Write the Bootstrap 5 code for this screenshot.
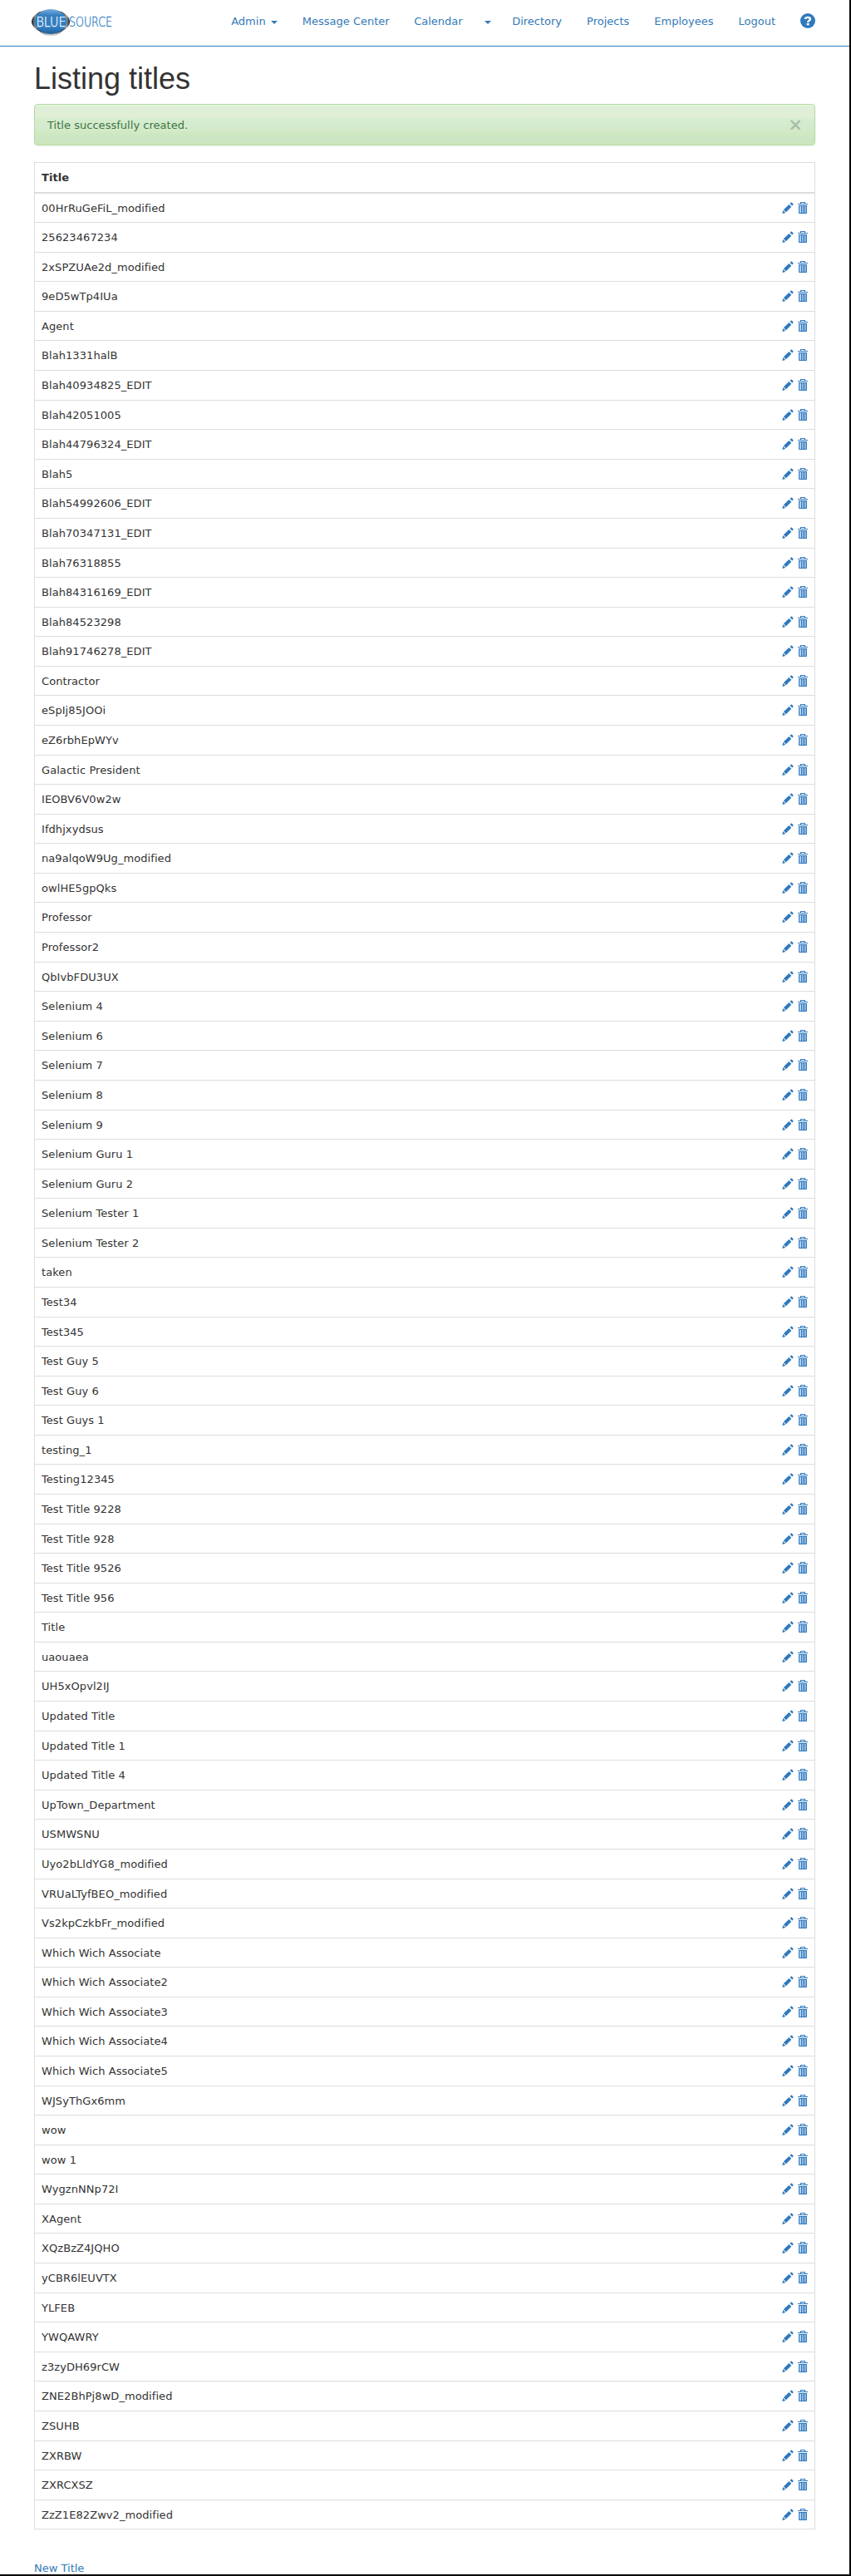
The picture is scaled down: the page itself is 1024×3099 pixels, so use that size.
<!DOCTYPE html>
<html lang="en">
<head>
<meta charset="utf-8">
<meta name="viewport" content="width=device-width, initial-scale=1">
<title>Listing titles</title>
<link href="https://cdn.jsdelivr.net/npm/bootstrap@5.3.0/dist/css/bootstrap.min.css" rel="stylesheet">
<style>
html, body { height: 3099px; overflow: hidden; }
body { font-family: Verdana, "DejaVu Sans", sans-serif; font-size: 13px; line-height: 1.428571; color: #333; background: #fff; }
a { color: #337ab7; text-decoration: none; }
.page-frame { height: 3099px; overflow: hidden; border-right: 2px solid #000; border-bottom: 2px solid #000; }
.top-bar { height: 56px; border-bottom: 1px solid #337ab7; padding: 0 41px 0 38px; }
.top-bar .nav-link { padding: 16px 15px 0; height: 52px; color: #337ab7; line-height: 19px; white-space: nowrap; }
.caret-down { display: inline-block; border-top: 4px solid; border-left: 4px solid transparent; border-right: 4px solid transparent; vertical-align: middle; margin-left: 2px; }
.top-bar .caret-link { padding-left: 10px; padding-right: 10px; }
.top-bar .calendar-link { padding-left: 14.5px; padding-right: 14.5px; }
.top-bar .help-link { padding-right: 0; }
.brand-logo { margin-top: 8px; }
.page-body { padding: 0 41px; }
h1 { font: 500 36px/40px "Liberation Sans", Arial, sans-serif; margin: 19px 0 10px; color: #333; }
.notice-bar { height: 50px; border: 1px solid #b2dba1; border-radius: 4px; padding: 0 15px; margin-bottom: 20px; color: #3c763d;
  background: linear-gradient(#e0f0d8 0, #dfeed5 15px, #d5edce 17px, #d4e9cf 28px, #d3eac5 31px, #cde8c3 36px, #cce5c3 43px, #cee7ba 48px);
  box-shadow: inset 0 1px 0 rgba(255,255,255,.25), 0 1px 2px rgba(0,0,0,.05); }
.notice-bar span { padding-top: 2px; letter-spacing: .03px; }
.notice-bar .dismiss { font: 400 26px/20px "Liberation Sans", Arial, sans-serif; color: #000; opacity: .2; background: none; border: 0; padding: 0; width: 16px; -webkit-text-stroke: .5px #000; }
.titles { --bs-table-color: #333; --bs-table-bg: #fff; color: #333; border: 1px solid #ddd; border-collapse: separate; border-spacing: 0; margin: 0 0 38px; letter-spacing: .07px; }
.titles > :not(caption) > * > * { padding: 9px 8px 7px; border: 0 solid #ddd; box-shadow: none; line-height: 18.58px; }
.titles > thead > tr > th { border-bottom-width: 2px; }
.titles > tbody > tr + tr > td { border-top-width: 1px; }
.row-tools svg { display: block; margin-top: 1px; }
.tool-set { height: 18.58px; gap: 5px; }
</style>
<script src="https://cdn.jsdelivr.net/npm/bootstrap@5.3.0/dist/js/bootstrap.bundle.min.js"></script>
</head>
<body>
<svg width="0" height="0" class="position-absolute" aria-hidden="true">
  <symbol id="pencil" viewBox="0 0 14 14"><path d="M.3 14l1-3.900 2.900 2.900zM1.900 9.300L8.400 2.900l2.900 2.900-6.500 6.400zM9.500 1.900l1-1c.5-.5 1-.5 1.400-.1l1.400 1.400c.4.4.4.900 0 1.400l-1 1z" fill="#2f78bd"/></symbol>
  <symbol id="trash" viewBox="0 0 12 14"><path d="M1 4h10v9.200q0 .8-.8.8H1.800Q1 14 1 13.200z" fill="#2f78bd"/><path d="M2 5h2v8H2zM5 5h1v8H5zM7 5h1v8H7zM9 5h1v8H9z" fill="#b0cef0"/><path d="M0 2h12v1H0zM3 0h6v2H8V1H4v1H3z" fill="#2f78bd"/></symbol>
</svg>
<div class="page-frame">
  <nav class="top-bar d-flex justify-content-between align-items-start">
    <a href="#" class="brand-logo" aria-label="Blue Source">
      <svg class="d-block overflow-visible" width="98" height="38" viewBox="38 8 98 38">
        <defs>
          <linearGradient id="ring" x1="0" x2="1"><stop offset="0" stop-color="#0d1114"/><stop offset=".1" stop-color="#999"/><stop offset=".2" stop-color="#222"/><stop offset=".8" stop-color="#222"/><stop offset=".91" stop-color="#aaa"/><stop offset="1" stop-color="#080c10"/></linearGradient>
          <linearGradient id="oval" x2="0" y2="1"><stop offset="0" stop-color="#79aedb"/><stop offset=".25" stop-color="#3680c2"/><stop offset=".75" stop-color="#317dc1"/><stop offset="1" stop-color="#225f96"/></linearGradient>
          <linearGradient id="shade" x2="0" y2="1"><stop offset=".8" stop-color="#777"/><stop offset="1" stop-color="#eee"/></linearGradient>
        </defs>
        <ellipse cx="61" cy="29" rx="17" ry="14.500" fill="url(#shade)"/>
        <ellipse cx="61" cy="26" rx="23" ry="14" fill="url(#ring)"/>
        <ellipse cx="61" cy="26" rx="19.500" ry="15" fill="url(#oval)"/>
        <g font-family="DejaVu Sans Light, DejaVu Sans, sans-serif" font-weight="200" font-size="15.500">
          <text x="43.500" y="31.500" fill="#fff" stroke="#fff" stroke-width=".25" textLength="36" lengthAdjust="spacingAndGlyphs">BLUE</text>
          <text x="83" y="31.500" fill="#317dc1" stroke="#317dc1" stroke-width=".35" textLength="52" lengthAdjust="spacingAndGlyphs">SOURCE</text>
        </g>
      </svg>
    </a>
    <div class="d-flex">
      <a class="nav-link" href="#">Admin <span class="caret-down"></span></a>
      <a class="nav-link" href="#">Message Center</a>
      <a class="nav-link calendar-link" href="#">Calendar</a>
      <a class="nav-link caret-link" href="#"><span class="caret-down"></span></a>
      <a class="nav-link" href="#">Directory</a>
      <a class="nav-link" href="#">Projects</a>
      <a class="nav-link" href="#">Employees</a>
      <a class="nav-link" href="#">Logout</a>
      <a class="nav-link help-link" href="#" aria-label="Help"><svg class="d-block" width="18" height="18" viewBox="0 0 18 18"><circle cx="9" cy="9" r="9" fill="#2f78bd"/><path d="M6 7C6 4.300 12 4.100 12 6.900 12 8.800 9.200 8.500 9.200 11" fill="none" stroke="#fff" stroke-width="2.400"/><path d="M7.700 12h3v2.300h-3z" fill="#fff"/></svg></a>
    </div>
  </nav>
  <main class="page-body">
    <h1>Listing titles</h1>
    <div class="notice-bar d-flex justify-content-between align-items-center" role="alert">
      <span>Title successfully created.</span>
      <button type="button" class="dismiss" aria-label="Close">×</button>
    </div>
    <table class="table titles">
      <thead><tr><th>Title</th><th></th></tr></thead>
      <tbody id="title-rows"></tbody>
    </table>
    <a href="#">New Title</a>
  </main>
</div>
<script>
const titles = `00HrRuGeFiL_modified
25623467234
2xSPZUAe2d_modified
9eD5wTp4IUa
Agent
Blah1331halB
Blah40934825_EDIT
Blah42051005
Blah44796324_EDIT
Blah5
Blah54992606_EDIT
Blah70347131_EDIT
Blah76318855
Blah84316169_EDIT
Blah84523298
Blah91746278_EDIT
Contractor
eSpIj85JOOi
eZ6rbhEpWYv
Galactic President
IEOBV6V0w2w
Ifdhjxydsus
na9alqoW9Ug_modified
owlHE5gpQks
Professor
Professor2
QbIvbFDU3UX
Selenium 4
Selenium 6
Selenium 7
Selenium 8
Selenium 9
Selenium Guru 1
Selenium Guru 2
Selenium Tester 1
Selenium Tester 2
taken
Test34
Test345
Test Guy 5
Test Guy 6
Test Guys 1
testing_1
Testing12345
Test Title 9228
Test Title 928
Test Title 9526
Test Title 956
Title
uaouaea
UH5xOpvl2IJ
Updated Title
Updated Title 1
Updated Title 4
UpTown_Department
USMWSNU
Uyo2bLldYG8_modified
VRUaLTyfBEO_modified
Vs2kpCzkbFr_modified
Which Wich Associate
Which Wich Associate2
Which Wich Associate3
Which Wich Associate4
Which Wich Associate5
WJSyThGx6mm
wow
wow 1
WygznNNp72I
XAgent
XQzBzZ4JQHO
yCBR6lEUVTX
YLFEB
YWQAWRY
z3zyDH69rCW
ZNE2BhPj8wD_modified
ZSUHB
ZXRBW
ZXRCXSZ
ZzZ1E82Zwv2_modified`.split("\n");
document.getElementById("title-rows").innerHTML = titles.map(t => `<tr><td>${t}</td><td class="row-tools"><div class="tool-set d-flex justify-content-end"><a href="#" aria-label="Edit"><svg width="14" height="14"><use href="#pencil"/></svg></a><a href="#" aria-label="Delete"><svg width="12" height="14"><use href="#trash"/></svg></a></div></td></tr>`).join("");
</script>
</body>
</html>
